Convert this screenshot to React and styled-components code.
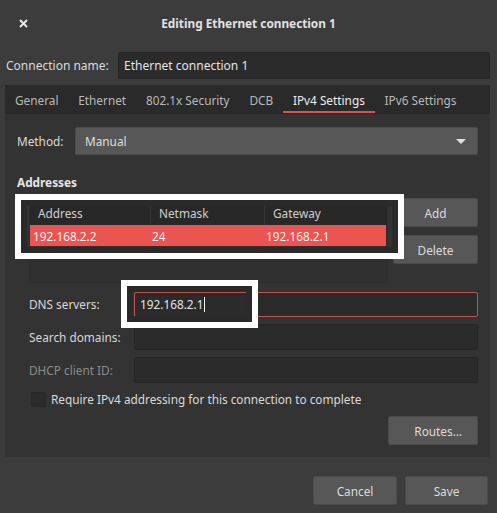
import React from "react";
import styled, { createGlobalStyle } from "styled-components";

const GlobalStyle = createGlobalStyle`
  html, body {
    margin: 0;
    padding: 0;
    background: #3c3c3c;
  }
  body {
    font-family: "Noto Sans", "Open Sans", sans-serif;
    font-size: 11.8px;
    color: #dadada;
  }
  * {
    box-sizing: border-box;
  }
`;

const tabs = ["General", "Ethernet", "802.1x Security", "DCB", "IPv4 Settings", "IPv6 Settings"];

const App = () => {
  return (
    <Window>
      <GlobalStyle />
      <TitleBar>
        <CloseBtn>
          <svg width="9" height="9" viewBox="0 0 9 9">
            <path d="M1 1 L8 8 M8 1 L1 8" stroke="#e6e6e6" strokeWidth="2" />
          </svg>
        </CloseBtn>
        <Title>Editing Ethernet connection 1</Title>
        <span />
      </TitleBar>

      <Body>
        <NameRow>
          <NameLabel>Connection name:</NameLabel>
          <Entry>Ethernet connection 1</Entry>
        </NameRow>

        <Notebook>
          <TabBar>
            {tabs.map((t) => (
              <Tab key={t} active={t === "IPv4 Settings"}>{t}</Tab>
            ))}
          </TabBar>

          <Panel>
            <MethodRow>
              <MethodLabel>Method:</MethodLabel>
              <Combo>
                Manual
                <Arrow />
              </Combo>
            </MethodRow>

            <Heading>Addresses</Heading>

            <AddrRow>
              <Tree>
                <TreeHeader>
                  <HeadCell>Address</HeadCell>
                  <HeadCell sep>Netmask</HeadCell>
                  <HeadCell sep>Gateway</HeadCell>
                </TreeHeader>
                <TreeRow>
                  <RowCell>192.168.2.2</RowCell>
                  <RowCell>24</RowCell>
                  <RowCell>192.168.2.1</RowCell>
                </TreeRow>
              </Tree>
              <SideButtons>
                <Button>Add</Button>
                <Button>Delete</Button>
              </SideButtons>
            </AddrRow>

            <FormGrid>
              <FieldLabel>DNS servers:</FieldLabel>
              <Entry focused>
                192.168.2.1<Caret />
              </Entry>
              <FieldLabel>Search domains:</FieldLabel>
              <Entry />
              <FieldLabel dim>DHCP client ID:</FieldLabel>
              <Entry />
            </FormGrid>

            <CheckRow>
              <CheckBox />
              Require IPv4 addressing for this connection to complete
            </CheckRow>

            <RoutesRow>
              <Button wide>Routes…</Button>
            </RoutesRow>
          </Panel>
        </Notebook>

        <Footer>
          <Button w={84}>Cancel</Button>
          <Button w={83}>Save</Button>
        </Footer>
      </Body>

      <Highlight style={{ left: 15, top: 194, width: 389, height: 65 }} />
      <Highlight style={{ left: 121, top: 280, width: 137, height: 48 }} />
    </Window>
  );
};

const Window = styled.div`
  position: relative;
  width: 497px;
  height: 513px;
  background: #3c3c3c;
  overflow: hidden;
`;

const TitleBar = styled.div`
  display: grid;
  grid-template-columns: 46px 1fr 46px;
  align-items: center;
  height: 46px;
`;

const CloseBtn = styled.div`
  display: flex;
  justify-content: center;
  align-items: center;
`;

const Title = styled.div`
  text-align: center;
  font-weight: bold;
  color: #e2e2e2;
`;

const Body = styled.div`
  padding: 6px 7px 0 5px;
`;

const NameRow = styled.div`
  display: flex;
  align-items: center;
`;

const NameLabel = styled.div`
  width: 113px;
  padding-left: 1px;
  font-size: 12px;
`;

const Entry = styled.div`
  flex: 1;
  display: flex;
  align-items: center;
  height: ${(p) => (p.focused ? "25px" : "26px")};
  padding: 0 5px;
  background: #2b2b2b;
  border: 1px solid ${(p) => (p.focused ? "#c2514c" : "#262626")};
  border-radius: 2px;
  color: #e4e4e4;
  ${NameRow} & {
    height: 27px;
    font-size: 12px;
  }
`;

const Caret = styled.span`
  display: inline-block;
  width: 1px;
  height: 15px;
  margin-left: 1px;
  background: #f0f0f0;
`;

const Notebook = styled.div`
  margin-top: 6px;
  background: #333333;
`;

const TabBar = styled.div`
  display: flex;
  height: 29px;
  background: #2a2a2a;
`;

const Tab = styled.div`
  position: relative;
  display: flex;
  align-items: center;
  padding: 0 9.9px;
  color: ${(p) => (p.active ? "#ececec" : "#b9b9b9")};
  &:first-child {
    padding-left: 10px;
  }
  ${(p) =>
    p.active &&
    `
    &::after {
      content: "";
      position: absolute;
      left: 0;
      right: 0;
      bottom: 1px;
      height: 2px;
      background: #d9534f;
    }
  `}
`;

const Panel = styled.div`
  padding: 13px 12px 12px 12px;
`;

const MethodRow = styled.div`
  display: flex;
  align-items: center;
`;

const MethodLabel = styled.div`
  width: 58px;
`;

const Combo = styled.div`
  position: relative;
  flex: 1;
  display: flex;
  align-items: center;
  height: 28px;
  padding: 0 9px;
  background: #575757;
  border: 1px solid #4c4c4c;
  border-radius: 2px;
  color: #dedede;
`;

const Arrow = styled.span`
  position: absolute;
  right: 11px;
  top: 11px;
  width: 0;
  height: 0;
  border-left: 5px solid transparent;
  border-right: 5px solid transparent;
  border-top: 5px solid #e0e0e0;
`;

const Heading = styled.div`
  margin-top: 19px;
  height: 16px;
  line-height: 16px;
  font-weight: bold;
  color: #e6e6e6;
`;

const AddrRow = styled.div`
  display: flex;
  gap: 5px;
  margin-top: 8px;
  padding-left: 12px;
`;

const Tree = styled.div`
  flex: 1;
  height: 83px;
  margin-top: 2px;
  background: #303030;
  border: 1px solid #2d2d2d;
`;

const TreeHeader = styled.div`
  display: grid;
  grid-template-columns: 120px 114px 1fr;
  height: 24px;
  background: #282828;
`;

const HeadCell = styled.div`
  display: flex;
  align-items: center;
  padding-left: 8px;
  color: #cfcfcf;
  border-left: ${(p) => (p.sep ? "1px solid #333" : "none")};
`;

const TreeRow = styled.div`
  display: grid;
  grid-template-columns: 119px 114px 1fr;
  height: 21px;
  margin-right: 1px;
  background: #ea5451;
  color: #fdf2f2;
`;

const RowCell = styled.div`
  display: flex;
  align-items: center;
  padding-left: 3px;
`;

const SideButtons = styled.div`
  display: flex;
  flex-direction: column;
  gap: 8px;
  width: 85px;
`;

const Button = styled.div`
  display: flex;
  align-items: center;
  justify-content: ${(p) => (p.wide ? "flex-end" : "center")};
  height: 29px;
  width: ${(p) => (p.w ? `${p.w}px` : p.wide ? "90px" : "auto")};
  padding: ${(p) => (p.wide ? "0 15px 0 0" : "0")};
  background: #575757;
  border: 1px solid #4b4b4b;
  border-radius: 2px;
  color: #dcdcdc;
`;

const FormGrid = styled.div`
  display: grid;
  grid-template-columns: 105px 1fr;
  grid-auto-rows: 26px;
  row-gap: 7px;
  align-items: center;
  margin-top: 8px;
  padding-left: 12px;
`;

const FieldLabel = styled.div`
  color: ${(p) => (p.dim ? "#8c8c8c" : "#d8d8d8")};
`;

const CheckRow = styled.div`
  display: flex;
  align-items: center;
  gap: 5px;
  margin-top: 8px;
  padding-left: 14px;
  height: 16px;
  color: #dadada;
`;

const CheckBox = styled.span`
  width: 15px;
  height: 15px;
  background: #2b2b2b;
  border: 1px solid #282828;
  border-radius: 2px;
`;

const RoutesRow = styled.div`
  display: flex;
  justify-content: flex-end;
  margin-top: 9px;
`;

const Footer = styled.div`
  display: flex;
  justify-content: flex-end;
  gap: 8px;
  margin-top: 19px;
  padding-right: 2px;
`;

const Highlight = styled.div`
  position: absolute;
  border: 6px solid #ffffff;
  box-shadow: inset 0 0 0 6px #2a2a2a;
  pointer-events: none;
`;

export default App;
